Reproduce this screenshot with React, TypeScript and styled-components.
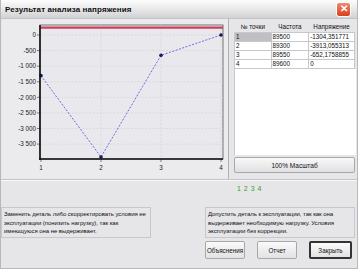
import styled, { createGlobalStyle } from "styled-components";

const GlobalStyle = createGlobalStyle`
  html, body {
    margin: 0;
    padding: 0;
    background: #e6e6e8;
  }
  body {
    font-family: "Liberation Sans", Arial, sans-serif;
  }
`;

const rows = [
  { n: "1", f: "89500", v: "-1304,351771" },
  { n: "2", f: "89300", v: "-3913,055313" },
  { n: "3", f: "89550", v: "-652,1758855" },
  { n: "4", f: "89600", v: "0" },
];

// chart scale: value 0 at y=35, -3913 at y=157
const yOf = (v: number) => 35 + (-v / 3913) * 122;
const xOf = (i: number) => 40 + i * 60;
const points = [-1304.35, -3913.05, -652.18, 0];
const yTicks = [0, -500, -1000, -1500, -2000, -2500, -3000, -3500];
const tickLabel = (v: number) =>
  v === 0 ? "0" : Math.abs(v) >= 1000 ? `-${Math.floor(-v / 1000)} ${String(-v % 1000).padStart(3, "0")}` : `${v}`;

const Chart = () => (
  <svg width="226" height="160" viewBox="1 19 226 160">
    <rect x="1" y="19" width="226" height="160" fill="#ebebed" />
    <rect x="39" y="25" width="183" height="134" fill="#e9e9ed" stroke="#555" strokeWidth="0.8" />
    {yTicks.map((t) => (
      <g key={t}>
        <line x1="39" x2="222" y1={yOf(t)} y2={yOf(t)} stroke="#cfcfd6" strokeWidth="0.6" strokeDasharray="2 1.5" />
        <line x1="36" x2="39" y1={yOf(t)} y2={yOf(t)} stroke="#333" strokeWidth="0.6" />
        <text x="35" y={yOf(t) + 2.2} fontSize="6.3" textAnchor="end" fill="#222" fontFamily="Liberation Sans, Arial, sans-serif">
          {tickLabel(t)}
        </text>
      </g>
    ))}
    {[1, 2, 3].map((i) => (
      <line key={i} x1={xOf(i)} x2={xOf(i)} y1="25" y2="159" stroke="#cfcfd6" strokeWidth="0.6" strokeDasharray="2 1.5" />
    ))}
    {[0, 1, 2, 3].map((i) => (
      <g key={i}>
        <line x1={xOf(i)} x2={xOf(i)} y1="159" y2="162" stroke="#333" strokeWidth="0.6" />
        <text x={xOf(i)} y="170" fontSize="6.3" textAnchor="middle" fill="#222" fontFamily="Liberation Sans, Arial, sans-serif">
          {i + 1}
        </text>
      </g>
    ))}
    <line x1="39" x2="222" y1="27.6" y2="27.6" stroke="#c9405c" strokeWidth="2.4" />
    <polyline
      points={points.map((v, i) => `${xOf(i)},${yOf(v)}`).join(" ")}
      fill="none"
      stroke="#4a4ad8"
      strokeWidth="0.8"
      strokeDasharray="2 1.5"
    />
    {points.map((v, i) => (
      <circle key={i} cx={xOf(i)} cy={yOf(v)} r="1.8" fill="#1a1a5a" />
    ))}
    <line x1="39" x2="39" y1="25" y2="160" stroke="#111" strokeWidth="1.6" />
    <line x1="38" x2="222" y1="159" y2="159" stroke="#111" strokeWidth="1.6" />
  </svg>
);

export default function App() {
  return (
    <>
      <GlobalStyle />
      <Window>
        <TitleBar>
          <Title>Результат анализа напряжения</Title>
          <CloseButton>✕</CloseButton>
        </TitleBar>
        <Body>
          <TopRow>
            <ChartPanel>
              <Chart />
            </ChartPanel>
            <SidePanel>
              <Table>
                <thead>
                  <tr>
                    <HeadCell $w={36}>№ точки</HeadCell>
                    <HeadCell $w={37}>Частота</HeadCell>
                    <HeadCell $w={45}>Напряжение</HeadCell>
                  </tr>
                </thead>
                <tbody>
                  {rows.map((r, i) => (
                    <tr key={r.n}>
                      <Cell $selected={i === 0}>{r.n}</Cell>
                      <Cell>{r.f}</Cell>
                      <Cell>{r.v}</Cell>
                    </tr>
                  ))}
                </tbody>
              </Table>
              <TableFill />
              <ScaleButton>100% Масштаб</ScaleButton>
            </SidePanel>
          </TopRow>
          <Divider />
          <Steps>1 2 3 4</Steps>
          <Messages>
            <Message>
              Заменить деталь либо скорректировать условия ее эксплуатации (понизить нагрузку), так как
              имеющуюся она не выдерживает.
            </Message>
            <Message>
              Допустить деталь к эксплуатации, так как она выдерживает необходимую нагрузку. Условия
              эксплуатации без коррекции.
            </Message>
          </Messages>
          <Buttons>
            <Button>Объяснения</Button>
            <Button>Отчет</Button>
            <Button $default>Закрыть</Button>
          </Buttons>
        </Body>
      </Window>
    </>
  );
}

const Window = styled.div`
  width: 358px;
  height: 269px;
  box-sizing: border-box;
  border: 1px solid #b8b8bc;
  border-top: none;
  display: flex;
  flex-direction: column;
  background: #e6e6e8;
  overflow: hidden;
`;

const TitleBar = styled.div`
  height: 18px;
  flex: none;
  display: flex;
  align-items: center;
  justify-content: space-between;
  padding: 0 6px 0 4px;
  background: linear-gradient(#fdfdfd, #e4e4e6 60%, #d2d2d6);
  border-bottom: 1px solid #c4c4c8;
`;

const Title = styled.span`
  font-size: 8px;
  font-weight: bold;
  color: #111;
  letter-spacing: 0.1px;
`;

const CloseButton = styled.div`
  width: 15px;
  height: 15px;
  box-sizing: border-box;
  border: 1px solid #fff;
  border-radius: 3px;
  background: linear-gradient(#f08a70, #d8401c);
  color: #fff;
  font-size: 10px;
  font-weight: bold;
  display: flex;
  align-items: center;
  justify-content: center;
  line-height: 1;
`;

const Body = styled.div`
  flex: 1;
  display: flex;
  flex-direction: column;
`;

const TopRow = styled.div`
  display: flex;
  gap: 3px;
  padding: 0 4px 0 1px;
  height: 160px;
`;

const ChartPanel = styled.div`
  width: 226px;
  height: 160px;
  border-right: 1px solid #b0b0b4;
  display: flex;
`;

const SidePanel = styled.div`
  flex: 1;
  display: flex;
  flex-direction: column;
  padding: 1px 0 6px 2px;
`;

const Table = styled.table`
  border-collapse: collapse;
  width: 121px;
  font-size: 6.3px;
  color: #111;
`;

const HeadCell = styled.th<{ $w: number }>`
  width: ${(p) => p.$w}px;
  height: 12px;
  font-weight: normal;
  text-align: center;
  padding: 0;
  background: #e6e6e8;
`;

const Cell = styled.td<{ $selected?: boolean }>`
  height: 8px;
  padding: 0 1px;
  border: 1px solid #c8c8cc;
  background: ${(p) => (p.$selected ? "#c0c0c4" : "#fff")};
  white-space: nowrap;
  overflow: hidden;
  max-width: 43px;
  line-height: 8px;
`;

const TableFill = styled.div`
  flex: 1;
  width: 121px;
  background: #fff;
  border-left: 1px solid #c8c8cc;
  margin-bottom: 2px;
`;

const ScaleButton = styled.div`
  width: 121px;
  height: 16px;
  box-sizing: border-box;
  border: 1px solid #a8a8ac;
  border-radius: 2px;
  background: linear-gradient(#f8f8f8, #e0e0e2);
  font-size: 6.5px;
  display: flex;
  align-items: center;
  justify-content: center;
  color: #111;
`;

const Divider = styled.div`
  height: 0;
  border-top: 1px solid #c4c4c8;
  border-bottom: 1px solid #fafafa;
`;

const Steps = styled.div`
  padding: 4px 0 0 236px;
  height: 14px;
  font-size: 7px;
  color: #3c9a3c;
  word-spacing: 1px;
`;

const Messages = styled.div`
  display: flex;
  justify-content: space-between;
  padding: 8px 2px 0 0;
`;

const Message = styled.div`
  width: 150px;
  height: 31px;
  box-sizing: border-box;
  border: 1px solid #c8c8cc;
  padding: 2px 2px;
  font-size: 6px;
  letter-spacing: -0.05px;
  line-height: 8.5px;
  color: #111;
  background: #e6e6e8;
`;

const Buttons = styled.div`
  display: flex;
  justify-content: flex-end;
  gap: 12px;
  padding: 3px 5px 0 0;
`;

const Button = styled.div<{ $default?: boolean }>`
  width: ${(p) => (p.$default ? 43 : 40)}px;
  height: 18px;
  box-sizing: border-box;
  border: ${(p) => (p.$default ? "2px solid #333" : "1px solid #a8a8ac")};
  border-radius: 2px;
  background: linear-gradient(#fafafa, #e2e2e4);
  font-size: 6.3px;
  display: flex;
  align-items: center;
  justify-content: center;
  color: #111;
`;
